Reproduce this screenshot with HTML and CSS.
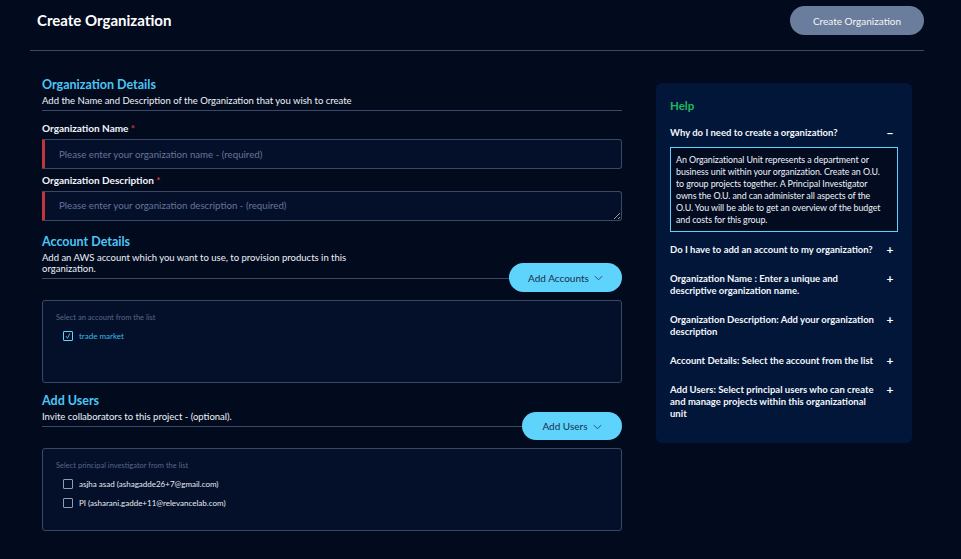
FILE: index.html
```html
<!DOCTYPE html>
<html lang="en">
<head>
<meta charset="utf-8">
<title>Create Organization</title>
<link rel="stylesheet" href="styles.css">
</head>
<body>
<div class="page">
  <header class="topbar">
    <h1 class="page-title">Create Organization</h1>
    <button class="btn-submit" type="button">Create Organization</button>
  </header>

  <main class="layout">
    <section class="form-col">
      <div class="section-head">
        <h2 class="section-title">Organization Details</h2>
        <p class="section-desc">Add the Name and Description of the Organization that you wish to create</p>
      </div>

      <label class="field-label">Organization Name <span class="req">*</span></label>
      <input class="field-input" type="text" placeholder="Please enter your organization name - (required)">

      <label class="field-label label-tight">Organization Description <span class="req">*</span></label>
      <textarea class="field-input field-area" placeholder="Please enter your organization description - (required)"></textarea>

      <h2 class="section-title title-gap">Account Details</h2>
      <div class="row-head">
        <p class="section-desc desc-narrow">Add an AWS account which you want to use, to provision products in this organization.</p>
        <button class="btn-add btn-accounts" type="button">Add Accounts
          <svg class="chev" viewBox="0 0 10 6" width="9" height="6"><path d="M1 1l4 4 4-4" fill="none" stroke="currentColor" stroke-width="1.1"/></svg>
        </button>
      </div>
      <div class="list-box">
        <p class="list-hint">Select an account from the list</p>
        <label class="check-row checked">
          <span class="check"><svg viewBox="0 0 10 10" width="10" height="10"><path d="M2.6 5.2l1.8 2.6 3-6" fill="none" stroke="currentColor" stroke-width="1"/></svg></span>
          <span>trade market</span>
        </label>
      </div>

      <h2 class="section-title title-gap2">Add Users</h2>
      <div class="row-head">
        <p class="section-desc">Invite collaborators to this project - (optional).</p>
        <button class="btn-add btn-users" type="button">Add Users
          <svg class="chev" viewBox="0 0 10 6" width="9" height="6"><path d="M1 1l4 4 4-4" fill="none" stroke="currentColor" stroke-width="1.1"/></svg>
        </button>
      </div>
      <div class="list-box">
        <p class="list-hint">Select principal investigator from the list</p>
        <label class="check-row"><span class="check"></span><span>asjha asad (ashagadde26+7@gmail.com)</span></label>
        <label class="check-row"><span class="check"></span><span>PI (asharani.gadde+11@relevancelab.com)</span></label>
      </div>
    </section>

    <aside class="help">
      <h3 class="help-title">Help</h3>
      <div class="help-item open">
        <span class="q">Why do I need to create a organization?</span>
        <span class="icon">&minus;</span>
      </div>
      <div class="help-answer">An Organizational Unit represents a department or<br>business unit within your organization. Create an O.U.<br>to group projects together. A Principal Investigator<br>owns the O.U. and can administer all aspects of the<br>O.U. You will be able to get an overview of the budget<br>and costs for this group.</div>
      <div class="help-item">
        <span class="q">Do I have to add an account to my organization?</span>
        <span class="icon">+</span>
      </div>
      <div class="help-item">
        <span class="q">Organization Name : Enter a unique and descriptive organization name.</span>
        <span class="icon">+</span>
      </div>
      <div class="help-item">
        <span class="q">Organization Description: Add your organization description</span>
        <span class="icon">+</span>
      </div>
      <div class="help-item">
        <span class="q">Account Details: Select the account from the list</span>
        <span class="icon">+</span>
      </div>
      <div class="help-item">
        <span class="q">Add Users: Select principal users who can create and manage projects within this organizational unit</span>
        <span class="icon">+</span>
      </div>
    </aside>
  </main>
</div>
</body>
</html>
```

FILE: styles.css
```css
* { box-sizing: border-box; }
html, body { margin: 0; padding: 0; }
body {
  background: #020a1e;
  color: #e8edf5;
  font-family: Lato, "Noto Sans", sans-serif;
  height: 559px;
  overflow: hidden;
}
.page { padding: 0 37px 0 30px; }

.topbar {
  display: flex;
  justify-content: space-between;
  align-items: flex-start;
  padding: 7px 0 15px 7px;
  border-bottom: 1px solid #3a4866;
}
.page-title {
  margin: 0;
  padding-top: 3px;
  font-size: 15px;
  font-weight: 700;
  color: #ffffff;
  line-height: 20px;
}
.btn-submit {
  width: 134px;
  height: 29px;
  margin-top: -1px;
  border: none;
  border-radius: 15px;
  background: #6b7d9c;
  color: #f4f6fa;
  font-family: inherit;
  font-size: 10px;
}

.layout {
  display: grid;
  grid-template-columns: 580px 256px;
  column-gap: 34px;
  padding: 0 12px;
}

.form-col { display: flex; flex-direction: column; padding-top: 26px; }

.section-head { border-bottom: 1px solid #3a4866; padding-bottom: 4px; }
.section-title {
  margin: 0;
  font-size: 12.5px;
  font-weight: 700;
  color: #4cc6f5;
  line-height: 16px;
}
.section-desc {
  margin: 0;
  font-size: 9.5px;
  line-height: 11px;
  color: #eef2f8;
  padding-top: 2px;
}

.field-label {
  margin-top: 11px;
  font-size: 10px;
  font-weight: 700;
  color: #f2f5fa;
  line-height: 13px;
}
.label-tight { margin-top: 5px; }
.req { color: #d2343a; }

.field-input {
  display: block;
  width: 100%;
  height: 30px;
  margin-top: 4px;
  background: #04102a;
  border: 1px solid #3a4866;
  border-left: 3px solid #c0363d;
  border-radius: 0 3px 3px 0;
  padding: 0 14px;
  color: #e8edf5;
  font-family: inherit;
  font-size: 9.7px;
  outline: none;
}
.field-input::placeholder { color: #67749a; }
.field-area { resize: vertical; padding-top: 7px; }

.title-gap { margin-top: 13px; }
.title-gap2 { margin-top: 10px; }

.row-head {
  display: flex;
  align-items: flex-end;
  justify-content: space-between;
  border-bottom: 1px solid #3a4866;
  margin-bottom: 21px;
}
.row-head .section-desc { padding-bottom: 4px; }
.desc-narrow { max-width: 330px; }
.btn-add {
  flex: none;
  height: 29px;
  margin-bottom: -14px;
  border: none;
  border-radius: 15px;
  background: #5ed4fd;
  color: #1b2d4a;
  font-family: inherit;
  font-size: 10px;
  display: flex;
  align-items: center;
  justify-content: center;
  gap: 5px;
}
.btn-accounts { width: 113px; }
.btn-users { width: 100px; height: 28px; }
.chev { margin-top: 1px; color: #34486a; }

.list-box {
  height: 83px;
  background: #041029;
  border: 1px solid #3a4866;
  border-radius: 3px;
  padding: 12px 13px;
}
.list-hint {
  margin: 0 0 3px;
  font-size: 7.5px;
  line-height: 10px;
  color: #56668a;
}
.check-row {
  display: flex;
  align-items: center;
  gap: 6px;
  margin-left: 7px;
  height: 19px;
  font-size: 8px;
  color: #e6ebf3;
}
.check {
  width: 10px;
  height: 10px;
  border: 1px solid #8f9cb6;
  border-radius: 1px;
  display: flex;
  align-items: center;
  justify-content: center;
}
.check svg { display: block; }
.checked { color: #3bb8e8; }
.checked .check { border-color: #5ed4fd; color: #5ed4fd; }

.help {
  align-self: start;
  margin-top: 32px;
  height: 360px;
  background: #02163a;
  border-radius: 6px;
  padding: 15px 14px 0 14px;
}
.help-title {
  margin: 0 0 13px;
  font-size: 11.5px;
  font-weight: 700;
  color: #1fba5c;
  line-height: 16px;
}
.help-item {
  display: flex;
  align-items: flex-start;
  margin-bottom: 17px;
}
.help-item.open { margin-bottom: 8px; }
.help-item .q {
  flex: 1;
  font-size: 9.5px;
  font-weight: 700;
  line-height: 12px;
  color: #f3f6fb;
}
.help-item .icon {
  flex: none;
  width: 16px;
  text-align: center;
  font-size: 12px;
  font-weight: 700;
  line-height: 12px;
  color: #ffffff;
}
.help-answer {
  border: 1px solid #5ed4fd;
  background: #020b1f;
  padding: 6px 2px 5px 5px;
  font-size: 8.9px;
  letter-spacing: -0.08px;
  line-height: 12px;
  white-space: nowrap;
  color: #eef2f8;
  margin-bottom: 12px;
}
```
